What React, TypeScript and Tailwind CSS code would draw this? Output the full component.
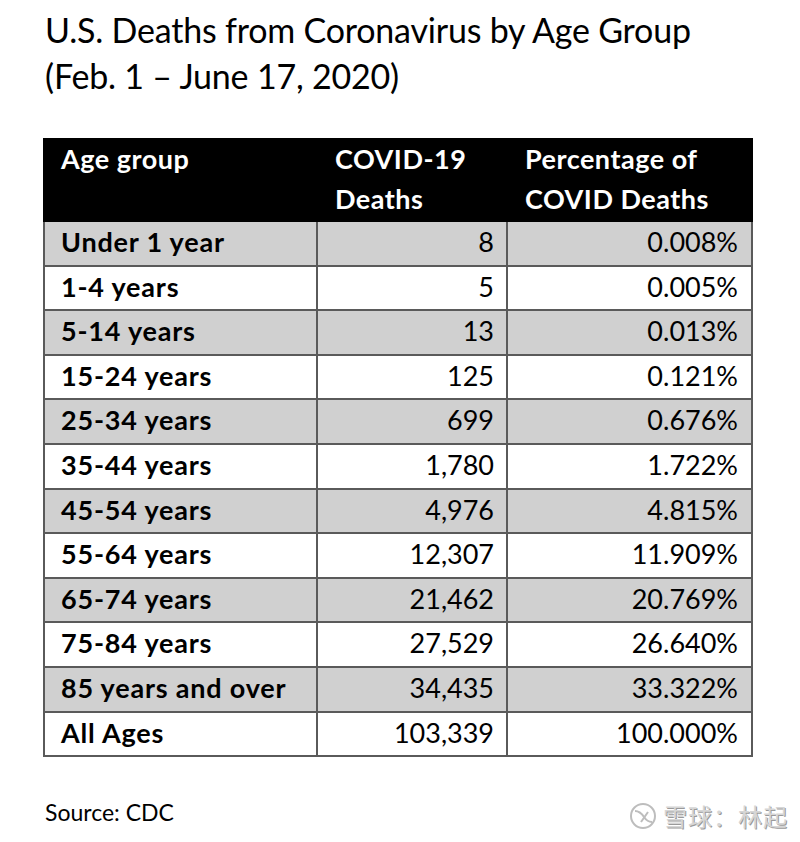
import React from "react";

const rows: [string, string, string][] = [
  ["Under 1 year", "8", "0.008%"],
  ["1-4 years", "5", "0.005%"],
  ["5-14 years", "13", "0.013%"],
  ["15-24 years", "125", "0.121%"],
  ["25-34 years", "699", "0.676%"],
  ["35-44 years", "1,780", "1.722%"],
  ["45-54 years", "4,976", "4.815%"],
  ["55-64 years", "12,307", "11.909%"],
  ["65-74 years", "21,462", "20.769%"],
  ["75-84 years", "27,529", "26.640%"],
  ["85 years and over", "34,435", "33.322%"],
  ["All Ages", "103,339", "100.000%"],
];

export default function App() {
  return (
    <div
      className="relative w-[800px] h-[842px] bg-white text-black overflow-hidden"
      style={{ fontFamily: "Lato, 'Noto Sans', sans-serif" }}
    >
      <div className="pl-[45px] pt-[7px] text-[34px] leading-[46px] tracking-[-0.2px]">
        <div>U.S. Deaths from Coronavirus by Age Group</div>
        <div>(Feb. 1 – June 17, 2020)</div>
      </div>

      <div className="ml-[43px] mt-[39px] w-[710px]">
        <div className="flex bg-black text-white font-bold text-[27px] leading-[40px] h-[84px] pt-[1px] tracking-[0.5px]">
          <div className="w-[275px] pl-[18px]">Age group</div>
          <div className="w-[190px] pl-[17px]">
            <div>COVID-19</div>
            <div>Deaths</div>
          </div>
          <div className="flex-1 pl-[17px]">
            <div>Percentage of</div>
            <div>COVID Deaths</div>
          </div>
        </div>
        <div className="border-x-2 border-[#5a5a5a]">
          {rows.map((r, i) => (
            <div
              key={r[0]}
              className={`flex h-[44.6px] border-b-2 border-[#5a5a5a] text-[27px] leading-[40px] ${
                i % 2 === 0 ? "bg-[#d0d0d0]" : "bg-white"
              }`}
            >
              <div className="w-[273px] pl-[16px] font-bold tracking-[0.8px] border-r-2 border-[#5a5a5a] whitespace-nowrap">
                {r[0]}
              </div>
              <div className="w-[190px] pr-[12px] text-right border-r-2 border-[#5a5a5a]">
                {r[1]}
              </div>
              <div className="flex-1 pr-[13px] text-right">{r[2]}</div>
            </div>
          ))}
        </div>
      </div>

      <div className="absolute left-[45px] top-[797px] text-[23px] leading-[30px]">Source: CDC</div>

      <div
        className="absolute left-[628px] top-[801px] flex items-center gap-[5px] text-[#d6d6d6]"
        style={{ textShadow: "1px 1px 0 #9a9a9a" }}
      >
        <svg width="30" height="30" viewBox="0 0 30 30" fill="none" stroke="#bdbdbd" strokeWidth="2">
          <circle cx="15" cy="15" r="12" />
          <path d="M7 10c4 0 7 3 9 6s4 5 8 5" />
          <path d="M13 21l7-10" />
        </svg>
        <span
          className="text-[24px] leading-[30px] tracking-[1px]"
          style={{ fontFamily: "'Noto Sans CJK SC', sans-serif" }}
        >
          雪球：林起
        </span>
      </div>
    </div>
  );
}
